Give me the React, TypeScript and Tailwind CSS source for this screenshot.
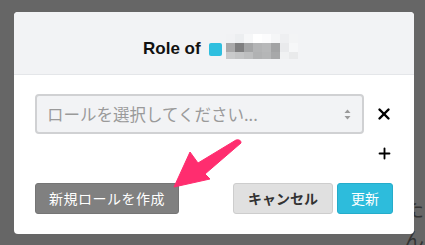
import React from 'react';
import { X, Plus } from 'lucide-react';

const mosaic: string[][] = [
  ['#f1f2f4', '#eceef0', '#f6f7f8', '#ffffff', '#fcfcfd', '#f5f6f7', '#eeeff1', '#f3f4f5', '#f2f3f5'],
  ['#a9a9aa', '#7f7f80', '#a4a5a6', '#b3b4b5', '#b7b8b9', '#a2a3a4', '#e9eaec', '#f6f7f8', '#f2f3f5'],
  ['#c9cacb', '#c3c4c5', '#bdbebf', '#b1b2b3', '#b5b6b7', '#a7a8a9', '#f0f1f2', '#e9eaeb', '#f2f3f5'],
];

const rowHeights = ['h-[9px]', 'h-[9px]', 'h-[7px]'];

const Mosaic: React.FC = () => (
  <div className="flex flex-col">
    {mosaic.map((row, i) => (
      <div key={i} className="flex">
        {row.map((c, j) => (
          <div key={j} className={`w-[9px] ${rowHeights[i]}`} style={{ backgroundColor: c }} />
        ))}
      </div>
    ))}
  </div>
);

const App: React.FC = () => {
  return (
    <div className="relative w-[425px] h-[245px] overflow-hidden bg-[#666666] font-['Liberation_Sans','Noto_Sans_CJK_JP',sans-serif]">
      {/* page content peeking out behind the overlay */}
      <span className="absolute left-[404px] top-[194px] text-[20px] text-[#333] font-['Noto_Sans_CJK_JP',sans-serif]">たん</span>

      <div className="relative mt-[12px] ml-[14px] w-[400px] h-[222px] bg-white rounded-[4px] overflow-hidden">
        <div className="h-[63px] bg-[#f2f3f5] border-b border-[#e4e6e9] flex items-center pl-[129px] pt-[12px]">
          <span className="text-[17px] font-bold text-[#111]">Role of</span>
          <span className="ml-[8px] w-[13px] h-[13px] rounded-[2px] bg-[#2fbfdf]" />
          <span className="ml-[4px] -mt-[6px]">
            <Mosaic />
          </span>
        </div>

        <div className="px-[21px] pt-[19px]">
          <div className="flex items-center">
            <div className="flex-1 h-[40px] bg-[#f2f3f5] border-2 border-[#d0d1d3] rounded-[4px] flex items-center pl-[10px] pr-[11px]">
              <span className="flex-1 text-[16.5px] text-[#9a9a9a] font-['Noto_Sans_CJK_JP',sans-serif] leading-none">ロールを選択してください...</span>
              <svg width="7" height="11" viewBox="0 0 7 11">
                <path d="M3.5 0.5 L6.5 4 H0.5 Z" fill="#9a9a9a" />
                <path d="M3.5 10.5 L6.5 7 H0.5 Z" fill="#9a9a9a" />
              </svg>
            </div>
            <div className="ml-[11px] w-[18px] flex justify-center">
              <X size={18} strokeWidth={3.2} color="#000" />
            </div>
          </div>

          <div className="flex justify-end mt-[11px]">
            <div className="w-[18px] flex justify-center">
              <Plus size={17} strokeWidth={2.6} color="#000" />
            </div>
          </div>

          <div className="flex items-center mt-[21px] font-['Noto_Sans_CJK_JP',sans-serif]">
            <button className="h-[31px] w-[144px] bg-[#808080] border border-[#757575] rounded-[3px] text-white text-[14px] tracking-[0.5px]">
              新規ロールを作成
            </button>
            <div className="flex-1" />
            <button className="h-[31px] w-[100px] bg-[#e0e0e0] border border-[#cdcdcd] rounded-[3px] text-[#333] text-[14px] font-bold">
              キャンセル
            </button>
            <button className="ml-[4px] h-[31px] w-[56px] bg-[#2dbcdc] border border-[#25acca] rounded-[3px] text-white text-[14px]">
              更新
            </button>
          </div>
        </div>
      </div>

      <svg className="absolute left-0 top-0 pointer-events-none" width="425" height="245" viewBox="0 0 425 245">
        <path
          d="M174 187 L190 152 L198 163 L236 140 Q241 139 241 143 L205 174 L210 179 Z"
          fill="#ff2d6f"
          stroke="#ff2d6f"
          strokeWidth="1"
          strokeLinejoin="round"
        />
      </svg>
    </div>
  );
};

export default App;
